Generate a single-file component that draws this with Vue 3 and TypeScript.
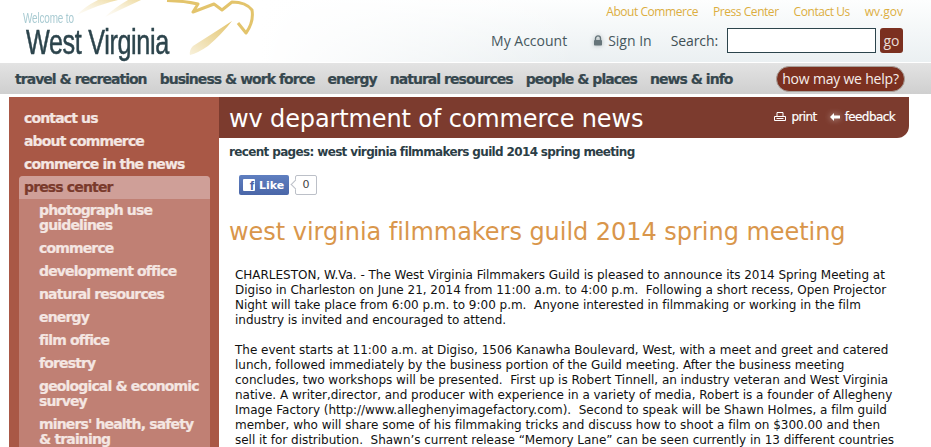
<template>
  <div class="page">
    <header class="top">
      <svg class="swoosh" viewBox="0 0 260 62" fill="none">
        <defs>
          <linearGradient id="sw1" x1="0" y1="1" x2="1" y2="0">
            <stop offset="0" stop-color="#f9f3e2" stop-opacity="0.3" />
            <stop offset="1" stop-color="#efdca4" />
          </linearGradient>
          <linearGradient id="sw2" x1="0" y1="1" x2="1" y2="0">
            <stop offset="0" stop-color="#f8f1dc" />
            <stop offset="1" stop-color="#e3c46c" />
          </linearGradient>
        </defs>
        <path d="M77 15 Q100 4 118 0 L98 0 Q84 7 77 15Z" fill="url(#sw1)" />
        <path d="M105 17 Q124 8 141 0 L128 0 Q114 8 105 17Z" fill="url(#sw1)" />
        <path d="M167 0.500 Q185 1 198 4 L193 12 L214 4 L222 10 L232 2 Q246 2 252 10 Q254 22 246 33 L238 23" stroke="#e3c46c" stroke-width="3" stroke-linejoin="round" />
        <path d="M190 55 Q189 50 193 46 Q212 34 232 21 Q222 34 208 46 Q198 53 190 55Z" fill="url(#sw2)" />
      </svg>
      <div class="brand">
        <div class="welcome">Welcome to</div>
        <div class="wv">West Virginia</div>
      </div>
      <div class="top-right">
        <nav class="util">
          <a v-for="u in utilLinks" :key="u">{{ u }}</a>
        </nav>
        <div class="tools">
          <span class="acct">My Account</span>
          <span class="signin">
            <svg class="lock" viewBox="0 0 10 11" width="10" height="11">
              <path d="M2.500 5V3.400a2.500 2.500 0 0 1 5 0V5" fill="none" stroke="#66757a" stroke-width="1.400" />
              <rect x="1" y="5" width="8" height="5.500" rx="0.800" fill="#66757a" />
            </svg>
            Sign In
          </span>
          <label class="search-label">Search:</label>
          <input class="search" type="text" />
          <button class="go">go</button>
        </div>
      </div>
    </header>

    <nav class="mainnav">
      <a v-for="n in mainLinks" :key="n">{{ n }}</a>
      <span class="help">how may we help?</span>
    </nav>

    <div class="body">
      <aside class="side">
        <a v-for="s in sideLinks" :key="s" class="side-link">{{ s }}</a>
        <div class="press">
          <div class="press-title">press center</div>
          <a v-for="p in pressLinks" :key="p" class="press-link">{{ p }}</a>
        </div>
      </aside>
      <main class="content">
        <div class="banner">
          <h1>wv department of commerce news</h1>
          <div class="banner-links">
            <span class="blink">
              <svg viewBox="0 0 12 10" width="12" height="10" fill="none" stroke="#fff">
                <path d="M3 4.500V.5h6v4M.5 4.500h11v4H.5z" />
                <path d="M2.500 6.500h7" />
              </svg>
              print
            </span>
            <span class="blink">
              <svg class="arrow" viewBox="0 0 10 8" width="10" height="8">
                <path d="M0 4 4 0v2.500h6v3H4V8z" fill="#fff" />
              </svg>
              feedback
            </span>
          </div>
        </div>
        <div class="crumbs">recent pages: west virginia filmmakers guild 2014 spring meeting</div>
        <div class="like-row">
          <span class="like">
            <span class="fb">f</span>
            Like
          </span>
          <span class="count">0</span>
        </div>
        <h2>west virginia filmmakers guild 2014 spring meeting</h2>
        <div class="article">
          <p v-for="(para, i) in paragraphs" :key="i">
            <template v-for="line in para" :key="line">{{ line }}<br /></template>
          </p>
        </div>
      </main>
    </div>
  </div>
</template>

<script setup lang="ts">
const utilLinks = ['About Commerce', 'Press Center', 'Contact Us', 'wv.gov']

const mainLinks = [
  'travel & recreation',
  'business & work force',
  'energy',
  'natural resources',
  'people & places',
  'news & info'
]

const sideLinks = ['contact us', 'about commerce', 'commerce in the news']

const pressLinks = [
  'photograph use guidelines',
  'commerce',
  'development office',
  'natural resources',
  'energy',
  'film office',
  'forestry',
  'geological & economic survey',
  "miners' health, safety & training"
]

const paragraphs: string[][] = [
  [
    'CHARLESTON, W.Va. - The West Virginia Filmmakers Guild is pleased to announce its 2014 Spring Meeting at',
    'Digiso in Charleston on June 21, 2014 from 11:00 a.m. to 4:00 p.m.  Following a short recess, Open Projector',
    'Night will take place from 6:00 p.m. to 9:00 p.m.  Anyone interested in filmmaking or working in the film',
    'industry is invited and encouraged to attend.'
  ],
  [
    'The event starts at 11:00 a.m. at Digiso, 1506 Kanawha Boulevard, West, with a meet and greet and catered',
    'lunch, followed immediately by the business portion of the Guild meeting. After the business meeting',
    'concludes, two workshops will be presented.  First up is Robert Tinnell, an industry veteran and West Virginia',
    'native. A writer,director, and producer with experience in a variety of media, Robert is a founder of Allegheny',
    'Image Factory (http://www.alleghenyimagefactory.com).  Second to speak will be Shawn Holmes, a film guild',
    'member, who will share some of his filmmaking tricks and discuss how to shoot a film on $300.00 and then',
    'sell it for distribution.  Shawn\u2019s current release \u201cMemory Lane\u201d can be seen currently in 13 different countries'
  ]
]
</script>

<style scoped>
.page {
  width: 931px;
  height: 447px;
  overflow: hidden;
  font-family: "DejaVu Sans", Verdana, sans-serif;
  background: #fff;
}

.top {
  position: relative;
  height: 62px;
  display: flex;
  justify-content: space-between;
  background:
    linear-gradient(90deg, #fff 28%, rgba(255, 255, 255, 0) 62%),
    linear-gradient(#fdfefe, #ebf0f2);
}

.swoosh {
  position: absolute;
  left: 0;
  top: 0;
  width: 260px;
  height: 62px;
}

.brand {
  position: relative;
  padding: 11px 0 0 23px;
}

.welcome {
  font-family: "Liberation Sans", sans-serif;
  font-size: 14px;
  letter-spacing: -0.2px;
  color: #a9cbd2;
  line-height: 15px;
  transform: scaleX(0.71);
  transform-origin: left top;
  white-space: nowrap;
}

.wv {
  font-family: "Liberation Sans", sans-serif;
  font-size: 35px;
  line-height: 32px;
  color: #2c444c;
  letter-spacing: -0.5px;
  -webkit-text-stroke: 0.5px #2c444c;
  transform: scaleX(0.72);
  transform-origin: left top;
  margin-left: 3px;
  white-space: nowrap;
}

.top-right {
  position: relative;
  padding: 5px 28px 0 0;
  display: flex;
  flex-direction: column;
  align-items: flex-end;
}

.util {
  display: flex;
  gap: 15px;
  font-family: "Open Sans", sans-serif;
  font-size: 12px;
  letter-spacing: -0.45px;
  line-height: 14px;
  color: #dcae3f;
}

.util a:last-child {
  letter-spacing: 0;
}

.tools {
  display: flex;
  align-items: center;
  margin-top: 9px;
  font-family: "Open Sans", sans-serif;
  font-size: 14px;
  color: #47585e;
}

.acct {
  margin-right: 26px;
}

.signin {
  display: flex;
  align-items: center;
  gap: 5px;
  margin-right: 19px;
}

.lock {
  filter: drop-shadow(0 0 2px rgba(102, 117, 122, 0.5));
}

.search-label {
  margin-right: 9px;
  letter-spacing: -0.1px;
  color: #3f4f55;
}

.search {
  box-sizing: border-box;
  width: 149px;
  height: 25px;
  border: 1px solid #2c444c;
  background: #fff;
  padding: 0;
  margin: 0;
}

.go {
  box-sizing: border-box;
  width: 23px;
  height: 25px;
  margin-left: 4px;
  padding: 0;
  border: none;
  border-radius: 3px;
  background: #7b3020;
  color: #e9ded8;
  font-family: "Open Sans", sans-serif;
  font-size: 14px;
}

.mainnav {
  height: 33px;
  box-sizing: border-box;
  border-top: 1px solid #fff;
  border-bottom: 1px solid #fff;
  display: flex;
  align-items: center;
  gap: 13px;
  padding-left: 15px;
  background: linear-gradient(#e3e3e3, #cfcfcf);
  font-size: 14px;
  font-weight: 700;
  letter-spacing: -0.97px;
  -webkit-text-stroke: 0.2px #36474e;
  color: #36474e;
  position: relative;
}

.help {
  position: absolute;
  left: 776px;
  top: 3px;
  width: 129px;
  height: 26px;
  box-sizing: border-box;
  border-radius: 13px;
  background: #7b3020;
  border: 1px solid #a8a09a;
  color: #f6eeea;
  font-family: "Open Sans", sans-serif;
  font-size: 14px;
  font-weight: 400;
  letter-spacing: -0.2px;
  -webkit-text-stroke: 0;
  line-height: 23px;
  text-align: center;
}

.body {
  display: flex;
  margin-left: 9px;
  margin-top: 2px;
}

.side {
  box-sizing: border-box;
  width: 210px;
  height: 350px;
  flex-shrink: 0;
  background: #a95846;
  padding: 10px 0 0 10px;
  font-weight: 700;
  font-size: 14px;
  letter-spacing: -0.85px;
  -webkit-text-stroke: 0.2px #f4e6e2;
  color: #f4e6e2;
}

.side-link {
  display: block;
  padding-left: 5px;
  line-height: 23px;
}

.press {
  width: 191px;
  margin-top: 0;
  background: #c08074;
  border-radius: 4px 4px 0 0;
  padding-bottom: 20px;
}

.press-title {
  background: #cf9f98;
  color: #7a3a2c;
  -webkit-text-stroke: 0.2px #7a3a2c;
  height: 23px;
  line-height: 23px;
  padding-left: 5px;
  border-radius: 4px 4px 0 0;
}

.press-link {
  display: block;
  width: 165px;
  margin-left: 20px;
  padding: 4px 0;
  line-height: 15px;
}

.content {
  width: 690px;
  flex-shrink: 0;
}

.banner {
  height: 41px;
  background: #7c3b2e;
  border-radius: 0 0 12px 0;
  display: flex;
  align-items: center;
  justify-content: space-between;
  padding: 0 14px 0 10px;
  color: #fff;
}

.banner h1 {
  margin: 2px 0 0;
  font-size: 24px;
  font-weight: 400;
  letter-spacing: -0.13px;
  white-space: nowrap;
}

.banner-links {
  display: flex;
  gap: 13px;
  font-size: 12px;
  letter-spacing: -0.6px;
  -webkit-text-stroke: 0.2px #fff;
  font-weight: 400;
  margin-bottom: 1px;
}

.blink {
  display: flex;
  align-items: center;
  gap: 5px;
}

.arrow {
  filter: drop-shadow(0 0 3px rgba(255, 255, 255, 0.6));
}

.crumbs {
  padding: 7px 0 0 10px;
  font-size: 12px;
  font-weight: 700;
  line-height: 15px;
  letter-spacing: -0.65px;
  color: #2c3e46;
}

.like-row {
  display: flex;
  align-items: center;
  margin: 15px 0 0 20px;
  height: 20px;
}

.like {
  display: flex;
  align-items: center;
  gap: 4px;
  box-sizing: border-box;
  width: 50px;
  height: 20px;
  padding-left: 4px;
  background: linear-gradient(#5f7fc0, #4a66a8);
  border-radius: 2px;
  color: #fff;
  font-size: 11px;
  font-weight: 700;
}

.fb {
  display: block;
  width: 12px;
  height: 12px;
  background: #fff;
  color: #4a66a8;
  border-radius: 1px;
  font-family: "Liberation Sans", sans-serif;
  font-size: 13px;
  line-height: 14px;
  text-align: right;
  padding-right: 1px;
  box-sizing: border-box;
}

.count {
  box-sizing: border-box;
  position: relative;
  width: 22px;
  height: 20px;
  margin-left: 6px;
  border: 1px solid #bcc0c8;
  border-radius: 2px;
  font-size: 11px;
  line-height: 18px;
  text-align: center;
  color: #444;
  background: #fff;
}

.count::before {
  content: "";
  position: absolute;
  left: -4px;
  top: 5px;
  width: 6px;
  height: 6px;
  background: #fff;
  border-left: 1px solid #bcc0c8;
  border-bottom: 1px solid #bcc0c8;
  transform: rotate(45deg);
}

.content h2 {
  margin: 22px 0 0 10px;
  font-size: 24px;
  font-weight: 400;
  line-height: 30px;
  letter-spacing: -0.04px;
  color: #d9964b;
  white-space: nowrap;
}

.article {
  padding: 21px 0 0 16px;
  font-size: 12px;
  line-height: 15px;
  letter-spacing: -0.02px;
  color: #111;
}

.article p {
  margin: 0 0 15px;
  white-space: pre;
}
</style>

<style>
html,
body {
  margin: 0;
  overflow: hidden;
}
</style>
